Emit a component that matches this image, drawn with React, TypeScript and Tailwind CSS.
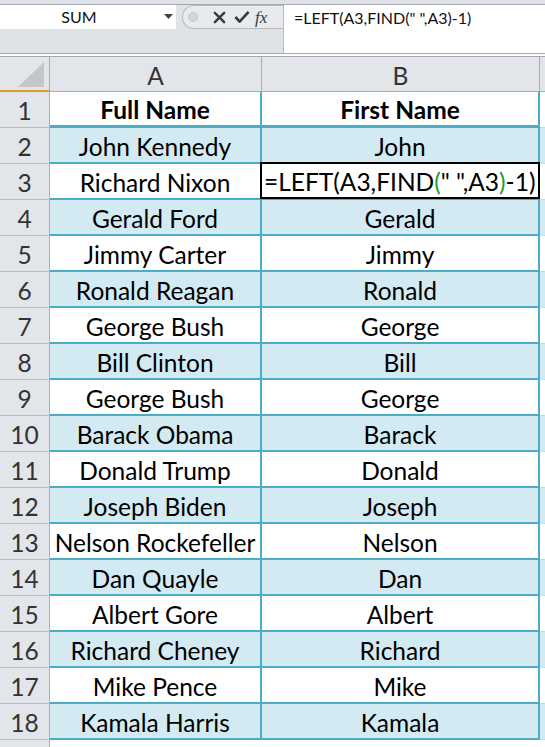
import React from 'react'

const rows: [string, string][] = [
  ['John Kennedy', 'John'],
  ['Richard Nixon', ''],
  ['Gerald Ford', 'Gerald'],
  ['Jimmy Carter', 'Jimmy'],
  ['Ronald Reagan', 'Ronald'],
  ['George Bush', 'George'],
  ['Bill Clinton', 'Bill'],
  ['George Bush', 'George'],
  ['Barack Obama', 'Barack'],
  ['Donald Trump', 'Donald'],
  ['Joseph Biden', 'Joseph'],
  ['Nelson Rockefeller', 'Nelson'],
  ['Dan Quayle', 'Dan'],
  ['Albert Gore', 'Albert'],
  ['Richard Cheney', 'Richard'],
  ['Mike Pence', 'Mike'],
  ['Kamala Harris', 'Kamala'],
]

const font = { fontFamily: 'Lato, "Liberation Sans", sans-serif' }

function FormulaText() {
  return (
    <>
      =LEFT(A3,FIND<span className="text-[#1f9a3c]">(</span>" ",A3<span className="text-[#1f9a3c]">)</span>-1)
    </>
  )
}

export default function App() {
  return (
    <div className="w-[545px] h-[747px] overflow-hidden bg-white text-black" style={font}>
      {/* Formula bar */}
      <div className="bg-[#dfe2e7] pt-[4px]">
        <div className="border-t border-[#a3a7ad] flex h-[49px]">
          <div className="w-[283px] flex flex-col">
            <div className="flex h-[24px]">
              <div className="w-[176px] bg-white flex items-center relative">
                <span className="flex-1 text-center text-[16px] text-[#111] pr-[6px]">SUM</span>
                <svg width="9" height="6" viewBox="0 0 9 6" className="mr-[3px]">
                  <path d="M0 0 L9 0 L4.5 5 Z" fill="#444" />
                </svg>
              </div>
              <div className="w-[6px]" />
              <div className="flex-1 flex items-center rounded-l-[12px] border border-r-0 border-[#b6bac0] bg-[#e8eaed]">
                <div className="ml-[5px] w-[10px] h-[10px] rounded-full bg-[#d3d6da] border border-[#c4c7cb]" />
                <svg width="13" height="13" viewBox="0 0 14 14" className="ml-[15px]">
                  <path d="M2 2 L12 12 M12 2 L2 12" stroke="#3a3a3a" strokeWidth="2.6" strokeLinecap="round" />
                </svg>
                <svg width="16" height="14" viewBox="0 0 17 14" className="ml-[8px]">
                  <path d="M1.5 7 L6 12 L15.5 1.5" stroke="#3a3a3a" strokeWidth="2.8" fill="none" strokeLinejoin="round" />
                </svg>
                <span
                  className="ml-[5px] text-[17px] italic text-[#3a3a3a] leading-none"
                  style={{ fontFamily: '"Liberation Serif", serif' }}
                >
                  fx
                </span>
              </div>
            </div>
            <div className="flex-1" />
          </div>
          <div className="flex-1 bg-white border-l border-[#b6bac0] pl-[10px] pt-[1px] text-[16px] text-[#111]">
            =LEFT(A3,FIND(" ",A3)-1)
          </div>
        </div>
        <div className="border-t border-[#a3a7ad] h-[3px] bg-white" />
        <div className="border-t border-[#a3a7ad]" />
      </div>

      {/* Sheet */}
      <div className="grid grid-cols-[50px_212px_278px_5px]">
        {/* column headers */}
        <div className="h-[35px] bg-[#e2e5e9] border-r border-[#a9adb3] border-b-2 border-b-[#e19a2c] flex items-end justify-end pr-[5px] pb-[3px]">
          <svg width="26" height="25" viewBox="0 0 26 25">
            <path d="M26 0 L26 25 L0 25 Z" fill="#c3c6ca" />
          </svg>
        </div>
        <div className="h-[35px] bg-[#e2e5e9] border-r border-[#a9adb3] border-b border-b-[#a9adb3] flex items-center justify-center pt-[4px] text-[24.5px] text-[#333]">
          A
        </div>
        <div className="h-[35px] bg-[#e2e5e9] border-r border-[#a9adb3] border-b border-b-[#a9adb3] flex items-center justify-center pt-[4px] text-[24.5px] text-[#333]">
          B
        </div>
        <div className="h-[35px] bg-[#e2e5e9] border-b border-b-[#a9adb3]" />

        {/* header row 1 */}
        <div className="h-[36px] bg-[#e2e5e9] border-r border-[#a9adb3] border-b border-b-[#b8bcc1] flex items-center justify-center pt-[4px] text-[24.5px] text-[#333]">
          1
        </div>
        <div className="h-[36px] border-b-[3px] border-[#4bacc6] border-r-2 flex items-center justify-center pt-[4px] text-[24.5px] font-bold">
          Full Name
        </div>
        <div className="h-[36px] border-b-[3px] border-[#4bacc6] border-r-2 flex items-center justify-center pt-[4px] text-[24.5px] font-bold">
          First Name
        </div>
        <div className="h-[36px] border-b border-[#d4d4d4]" />

        {rows.map(([full, first], i) => {
          const n = i + 2
          const banded = n % 2 === 0
          const bg = banded ? 'bg-[#d3eaf2]' : 'bg-white'
          return (
            <React.Fragment key={n}>
              <div className="h-[36px] bg-[#e2e5e9] border-r border-[#a9adb3] border-b border-b-[#b8bcc1] flex items-center justify-center pt-[4px] text-[24.5px] text-[#333]">
                {n}
              </div>
              <div className={`h-[36px] ${bg} border-b-2 border-r-2 border-[#4bacc6] flex items-center justify-center pt-[4px] text-[24.5px]`}>
                {full}
              </div>
              {n === 3 ? (
                <div className={`h-[36px] ${bg} border-b-2 border-r-2 border-[#4bacc6] relative`}>
                  <div className="absolute -top-[2px] -left-[2px] right-[-2px] bottom-[-1px] border-2 border-black bg-white flex items-center pl-[2px] pt-[4px] text-[24.5px] whitespace-nowrap overflow-hidden">
                    <FormulaText />
                  </div>
                </div>
              ) : (
                <div className={`h-[36px] ${bg} border-b-2 border-r-2 border-[#4bacc6] flex items-center justify-center pt-[4px] text-[24.5px]`}>
                  {first}
                </div>
              )}
              <div className={`h-[36px] ${bg} border-b border-[#d4d4d4]`} />
            </React.Fragment>
          )
        })}

        <div className="h-[10px] bg-[#e2e5e9] border-r border-[#a9adb3]" />
        <div className="h-[10px]" />
        <div className="h-[10px]" />
        <div className="h-[10px]" />
      </div>
    </div>
  )
}
